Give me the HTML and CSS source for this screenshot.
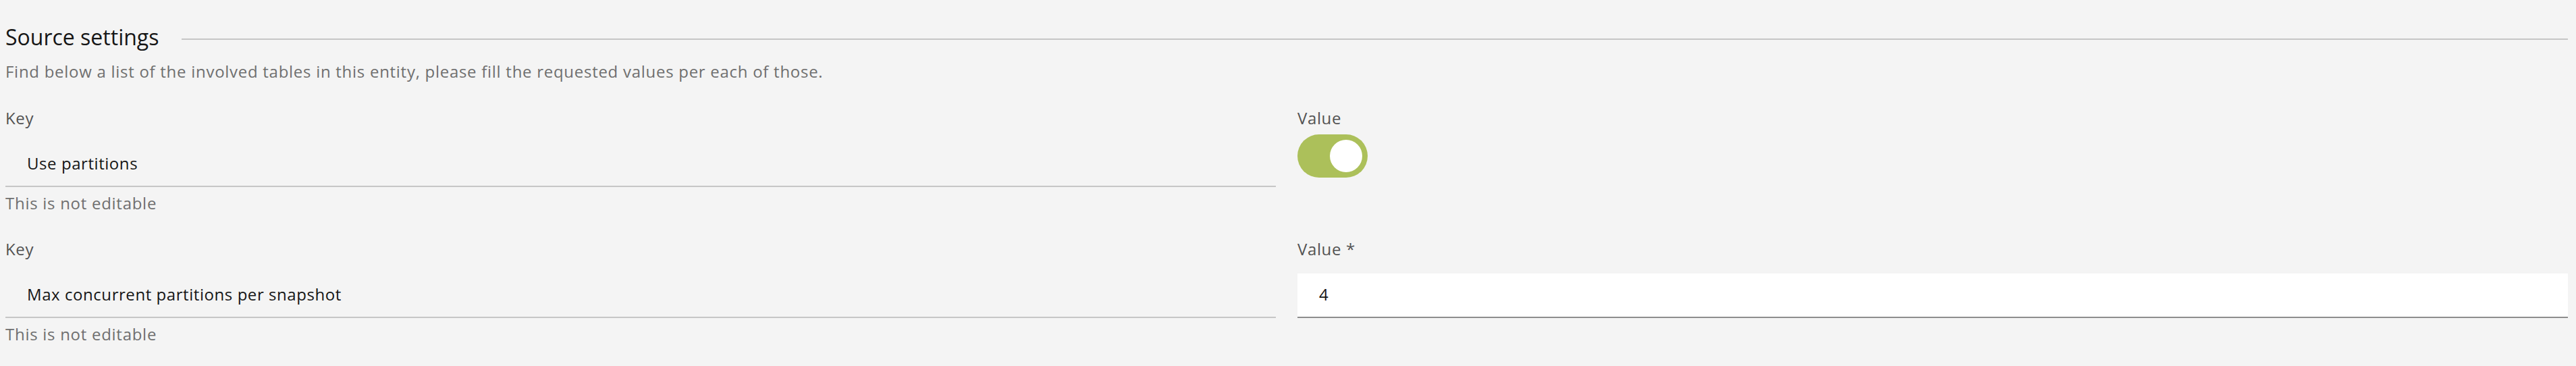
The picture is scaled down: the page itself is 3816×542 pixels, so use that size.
FILE: index.html
```html
<!DOCTYPE html>
<html lang="en">
<head>
<meta charset="utf-8">
<title>Source settings</title>
<link rel="stylesheet" href="styles.css">
</head>
<body>
<div class="page">
  <div class="section-head">
    <h2 class="title">Source settings</h2>
    <div class="rule"></div>
  </div>
  <p class="desc">Find below a list of the involved tables in this entity, please fill the requested values per each of those.</p>
  <div class="rows">
    <div class="row">
      <div class="col">
        <label class="label">Key</label>
        <div class="field">Use partitions</div>
        <div class="helper">This is not editable</div>
      </div>
      <div class="col">
        <label class="label">Value</label>
        <div class="toggle"><span class="knob"></span></div>
      </div>
    </div>
    <div class="row">
      <div class="col">
        <label class="label">Key</label>
        <div class="field">Max concurrent partitions per snapshot</div>
        <div class="helper">This is not editable</div>
      </div>
      <div class="col">
        <label class="label">Value *</label>
        <div class="field input">4</div>
      </div>
    </div>
  </div>
</div>
</body>
</html>
```

FILE: styles.css
```css
html, body {
  margin: 0;
  background: #f4f4f4;
}
body {
  font-family: "Open Sans", "Liberation Sans", sans-serif;
  color: #161616;
}
.page {
  padding: 35px 12px 0 8px;
}
.section-head {
  display: flex;
  align-items: flex-start;
  height: 40px;
}
.title {
  margin: 0;
  font-size: 32px;
  line-height: 40px;
  font-weight: 400;
  color: #161616;
  white-space: nowrap;
}
.rule {
  flex: 1;
  height: 2px;
  background: #c6c6c6;
  margin: 22px 0 0 34px;
}
.desc {
  margin: 15px 0 0;
  font-size: 24px;
  line-height: 32px;
  letter-spacing: 0.72px;
  color: #6f6f6f;
}
.rows {
  display: flex;
  flex-direction: column;
  gap: 36px;
  margin-top: 37px;
}
.row {
  display: grid;
  grid-template-columns: 1fr 1fr;
  column-gap: 32px;
}
.col {
  display: flex;
  flex-direction: column;
  align-items: stretch;
}
.label {
  display: block;
  font-size: 24px;
  line-height: 32px;
  letter-spacing: 0.64px;
  color: #525252;
}
.field {
  margin-top: 20px;
  box-sizing: border-box;
  height: 66px;
  border-bottom: 2px solid #c6c6c6;
  padding: 0 32px 4px;
  display: flex;
  align-items: center;
  font-size: 24px;
  letter-spacing: 0.56px;
  color: #161616;
}
.field.input {
  background: #ffffff;
  border-bottom-color: #8d8d8d;
}
.helper {
  margin-top: 8px;
  font-size: 24px;
  line-height: 32px;
  letter-spacing: 0.72px;
  color: #6f6f6f;
}
.toggle {
  margin-top: 8px;
  width: 104px;
  height: 64px;
  box-sizing: border-box;
  border-radius: 32px;
  background: #acc05a;
  display: flex;
  align-items: center;
  justify-content: flex-end;
  padding: 0 8px;
}
.knob {
  width: 48px;
  height: 48px;
  border-radius: 50%;
  background: #ffffff;
}
```
